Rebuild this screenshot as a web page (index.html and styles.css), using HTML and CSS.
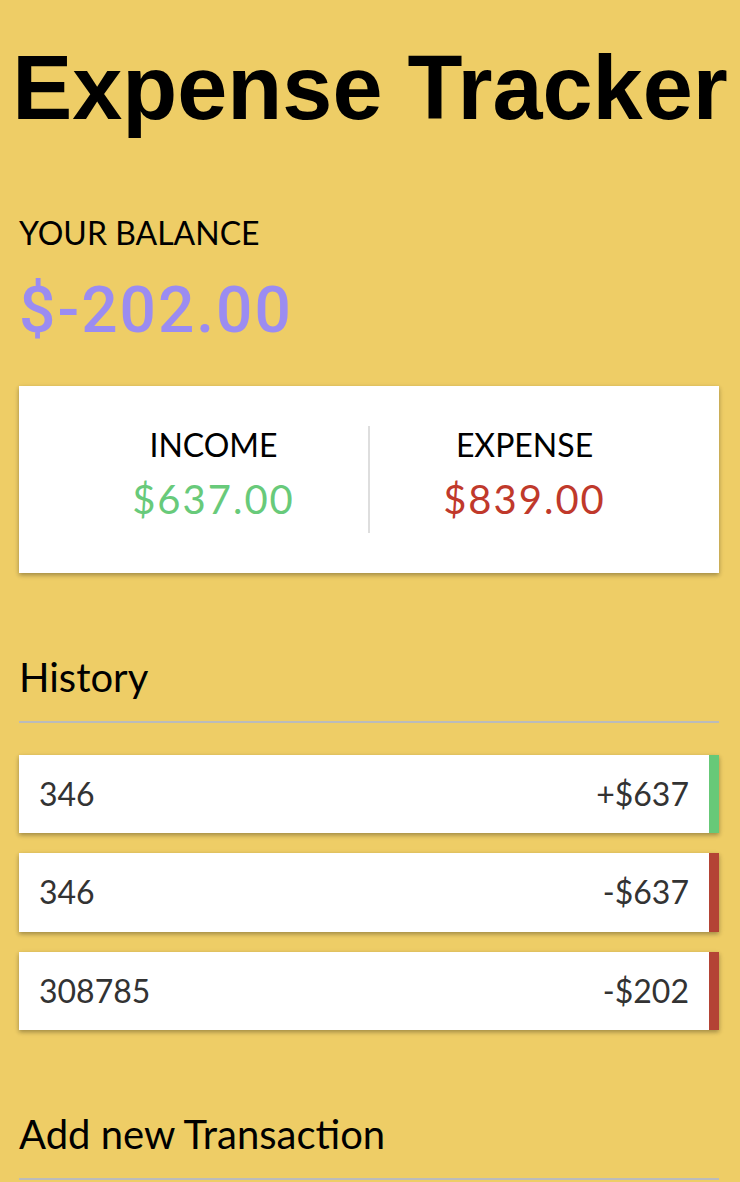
FILE: index.html
```html
<!DOCTYPE html>
<html lang="en">
<head>
<meta charset="utf-8">
<title>Expense Tracker</title>
<link rel="stylesheet" href="styles.css">
</head>
<body>
  <h1 class="title">Expense Tracker</h1>
  <div class="container">
    <h4 class="label">Your Balance</h4>
    <p class="balance">$-202.00</p>

    <div class="inc-exp">
      <div class="inc-exp-col first">
        <h4 class="label">Income</h4>
        <p class="money plus">$637.00</p>
      </div>
      <div class="inc-exp-col">
        <h4 class="label">Expense</h4>
        <p class="money minus">$839.00</p>
      </div>
    </div>

    <h3 class="section">History</h3>
    <ul class="list">
      <li class="item plus"><span>346</span><span>+$637</span></li>
      <li class="item minus"><span>346</span><span>-$637</span></li>
      <li class="item minus"><span>308785</span><span>-$202</span></li>
    </ul>

    <h3 class="section">Add new Transaction</h3>
  </div>
</body>
</html>
```
FILE: styles.css
```css
html, body {
  background-color: #eecd66;
}

body {
  margin: 0;
  font-family: "Lato", "Open Sans", sans-serif;
  color: #000;
}

.title {
  margin: 43px 0 81px;
  text-align: center;
  font-family: "Liberation Sans", Arial, sans-serif;
  font-weight: 700;
  font-size: 90px;
  line-height: 90px;
  color: #000;
}

.container {
  width: 700px;
  margin: 0 21px 0 19px;
}

.label {
  margin: 0;
  font-size: 32px;
  line-height: 1.2;
  font-weight: 400;
  text-transform: uppercase;
}

.balance {
  margin: 21px 0 0;
  font-family: Roboto, "Liberation Sans", sans-serif;
  font-weight: 500;
  font-size: 64px;
  line-height: 75px;
  letter-spacing: 2px;
  color: #9b8cf1;
}

.inc-exp {
  display: flex;
  margin: 38px 0 0;
  padding: 40px;
  background-color: #fff;
  box-shadow: 0 2px 6px rgba(0, 0, 0, 0.12), 0 2px 4px rgba(0, 0, 0, 0.24);
}

.inc-exp-col {
  flex: 1;
  text-align: center;
}

.inc-exp-col.first {
  border-right: 2px solid #dedede;
}

.money {
  margin: 10px 0;
  font-size: 40px;
  line-height: 1.2;
  letter-spacing: 2px;
}

.money.plus {
  color: #68ca7a;
}

.money.minus {
  color: #c0392b;
}

.section {
  margin: 80px 0 20px;
  padding-bottom: 20px;
  border-bottom: 2px solid #bbb;
  font-size: 40px;
  line-height: 1.2;
  font-weight: 400;
}

.list {
  list-style: none;
  padding: 0;
  margin: 32px 0 80px;
}

.item {
  display: flex;
  justify-content: space-between;
  margin: 20px 0;
  padding: 20px;
  background-color: #fff;
  color: #333;
  font-size: 32px;
  line-height: 1.2;
  box-shadow: 0 2px 6px rgba(0, 0, 0, 0.12), 0 2px 4px rgba(0, 0, 0, 0.24);
}

.item.plus {
  border-right: 10px solid #67c978;
}

.item.minus {
  border-right: 10px solid #b44335;
}
```
